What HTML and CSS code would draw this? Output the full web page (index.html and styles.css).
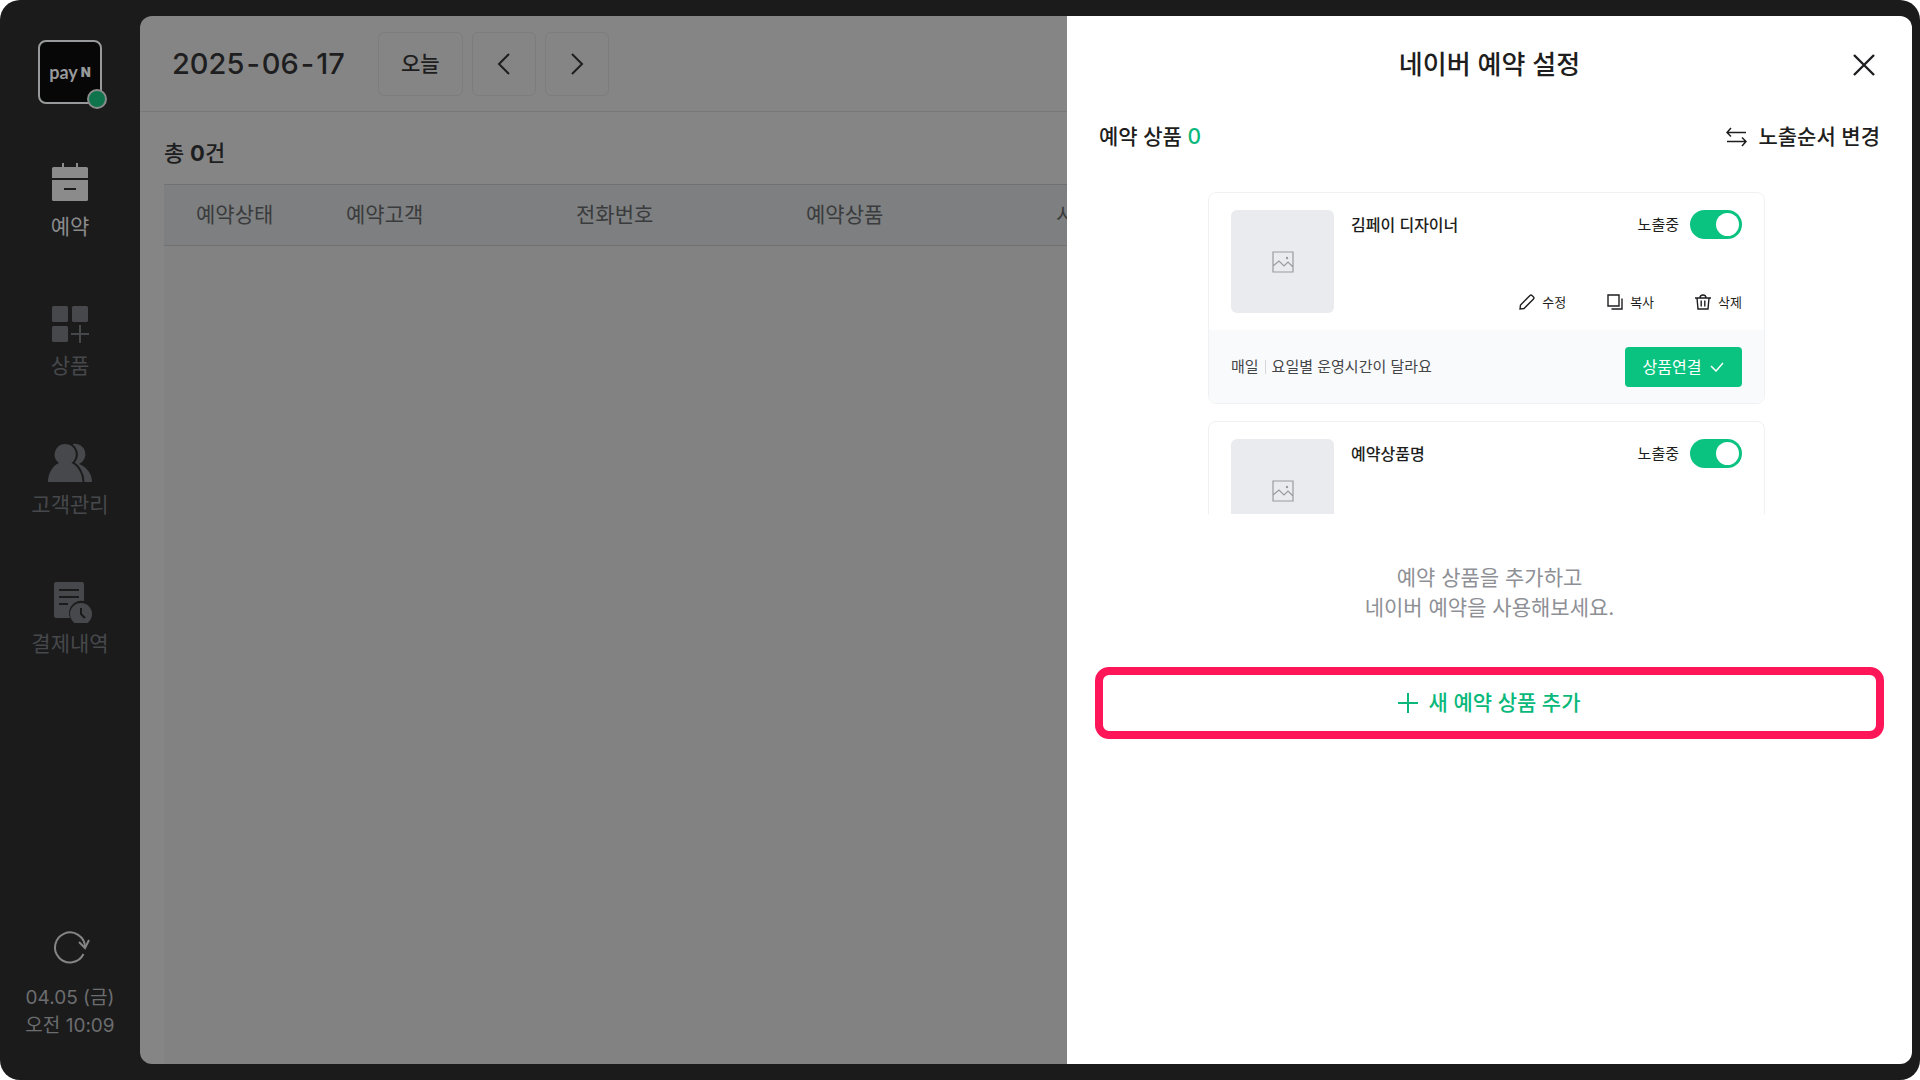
FILE: index.html
```html
<!DOCTYPE html>
<html lang="ko">
<head>
  <meta charset="UTF-8" />
  <meta name="viewport" content="width=device-width, initial-scale=1.0"/>
  <title>네이버 예약 설정</title>
  <link rel="stylesheet" href="styles.css">
</head>
<body>

  <div class="device">
    <aside class="sidebar">
      <div class="logo">
        <span class="logo-pay">pay</span><span class="logo-n">N</span>
        <span class="status-dot"></span>
      </div>

      <nav class="menu">
        <a href="#" class="active">
          <svg width="44" height="44" viewBox="0 0 44 44" fill="currentColor">
            <path d="M14 1h2v4h12V1h2v4h8.500a1.500 1.500 0 0 1 1.500 1.500V16H4V6.500A1.500 1.500 0 0 1 5.500 5H14z"/>
            <path fill-rule="evenodd" d="M4 18h36v19.500a1.500 1.500 0 0 1-1.500 1.500h-33A1.500 1.500 0 0 1 4 37.500zM16 26v2h12v-2z"/>
          </svg>
          <span>예약</span>
        </a>
        <a href="#">
          <svg width="44" height="44" viewBox="0 0 44 44" fill="currentColor">
            <rect x="4" y="5" width="16" height="16" rx="1.500"/>
            <rect x="24" y="5" width="16" height="16" rx="1.500"/>
            <rect x="4" y="25" width="16" height="16" rx="1.500"/>
            <path d="M31 24h2v8h8v2h-8v8h-2v-8h-8v-2h8z"/>
          </svg>
          <span>상품</span>
        </a>
        <a href="#">
          <svg width="46" height="44" viewBox="0 0 46 44" fill="currentColor">
            <path d="M26 4a10.500 10.500 0 0 1 6 20c8 3 13 10 13 18H25z"/>
            <path class="outline" d="M18 4a10.500 10.500 0 0 1 6.500 19C31 26 35.500 34 35.500 42H1C1 34 5 26 12 23A10.500 10.500 0 0 1 18 4z"/>
            <path d="M18 4a10.500 10.500 0 0 1 6.500 19C31 26 35.500 34 35.500 42H1C1 34 5 26 12 23A10.500 10.500 0 0 1 18 4z"/>
          </svg>
          <span>고객관리</span>
        </a>
        <a href="#">
          <svg width="44" height="44" viewBox="0 0 44 44" fill="currentColor">
            <path d="M8 3h26a2 2 0 0 1 2 2v17a12.500 12.500 0 0 0-14 17H8a2 2 0 0 1-2-2V5a2 2 0 0 1 2-2z"/>
            <path class="cut" d="M11 11h20M11 18h20M11 25h9"/>
            <circle cx="33" cy="35" r="11"/>
            <path class="cut" d="M33 29v6l4 4"/>
          </svg>
          <span>결제내역</span>
        </a>
      </nav>

      <div class="sync">
        <button type="button" class="refresh" aria-label="새로고침">
          <svg width="44" height="40" viewBox="0 0 44 40" fill="none" stroke="currentColor" stroke-width="2">
            <path d="M35.500 26A15 15 0 1 1 37 19"/>
            <path d="M31 14l6 6 4-8"/>
          </svg>
        </button>
        <p>04.05 (금)</p>
        <p>오전 10:09</p>
      </div>
    </aside>

    <div class="screen">
      <main class="reservations">
        <div class="toolbar">
          <h1 class="date"><span>2025</span><span>-</span><span>06</span><span>-</span><span>17</span></h1>
          <button type="button" class="today">오늘</button>
          <button type="button" class="arrow" aria-label="이전">
            <svg width="24" height="24" viewBox="0 0 24 24" fill="none" stroke="currentColor" stroke-width="2"><path d="M17 2L7 12l10 10"/></svg>
          </button>
          <button type="button" class="arrow" aria-label="다음">
            <svg width="24" height="24" viewBox="0 0 24 24" fill="none" stroke="currentColor" stroke-width="2"><path d="M7 2l10 10L7 22"/></svg>
          </button>
        </div>

        <p class="total">총 <b>0</b>건</p>

        <div class="table-area">
          <table>
            <thead>
              <tr>
                <th class="col-state">예약상태</th>
                <th class="col-info">예약고객</th>
                <th class="col-info">전화번호</th>
                <th class="col-product">예약상품</th>
                <th>시간</th>
              </tr>
            </thead>
          </table>
        </div>
      </main>

      <section class="panel">
        <header class="panel-header">
          <h2>네이버 예약 설정</h2>
          <button type="button" class="close" aria-label="닫기">
            <svg width="24" height="24" viewBox="0 0 24 24" fill="none" stroke="currentColor" stroke-width="2.400"><path d="M2 2l20 20M22 2L2 22"/></svg>
          </button>
        </header>

        <div class="panel-sub">
          <p>예약 상품 <em>0</em></p>
          <button type="button" class="order">
            <svg width="21" height="20" viewBox="0 0 21 20" fill="none" stroke="currentColor" stroke-width="1.500"><path d="M5 1L1 5.500l4 4M1 5.500h19M16 10.500l4 4-4 4.500M20 14.500H1"/></svg>
            노출순서 변경
          </button>
        </div>

        <div class="preview">
          <article class="card">
            <div class="card-top">
              <div class="thumb">
                <svg width="22" height="22" viewBox="0 0 22 22" fill="none" stroke="currentColor" stroke-width="1.200"><path d="M1 1h20v20H1zM1 15l6-5 5 5 4-4 5 5"/><circle cx="15" cy="7" r=".6"/></svg>
              </div>
              <div class="card-body">
                <div class="card-row">
                  <h3>김페이 디자이너</h3>
                  <label class="switch">노출중 <input type="checkbox" checked></label>
                </div>
                <div class="card-actions">
                  <button type="button">
                    <svg width="16" height="16" viewBox="0 0 16 16" fill="none" stroke="currentColor" stroke-width="1.400"><path d="M1 15l.5-4L11 1.500q1-1 2 0l1.500 1.500q1 1 0 2L5 14.500z"/></svg>
                    수정
                  </button>
                  <button type="button">
                    <svg width="16" height="16" viewBox="0 0 16 16" fill="none" stroke="currentColor" stroke-width="1.400"><path d="M1 1h11v11H1zM15 4.500V15H4.500"/></svg>
                    복사
                  </button>
                  <button type="button">
                    <svg width="16" height="16" viewBox="0 0 16 16" fill="none" stroke="currentColor" stroke-width="1.400"><path d="M0 4h16M5 4q0-3 3-3t3 3M2 4l1 11h10l1-11M6.200 6.500v6M9.800 6.500v6"/></svg>
                    삭제
                  </button>
                </div>
              </div>
            </div>
            <div class="card-bottom">
              <p class="hours"><span>매일</span><span>요일별 운영시간이 달라요</span></p>
              <button type="button" class="connect">
                상품연결
                <svg width="14" height="10" viewBox="0 0 14 10" fill="none" stroke="currentColor" stroke-width="1.500"><path d="M1 4l5 5 7-8"/></svg>
              </button>
            </div>
          </article>

          <article class="card">
            <div class="card-top">
              <div class="thumb">
                <svg width="22" height="22" viewBox="0 0 22 22" fill="none" stroke="currentColor" stroke-width="1.200"><path d="M1 1h20v20H1zM1 15l6-5 5 5 4-4 5 5"/><circle cx="15" cy="7" r=".6"/></svg>
              </div>
              <div class="card-body">
                <div class="card-row">
                  <h3>예약상품명</h3>
                  <label class="switch">노출중 <input type="checkbox" checked></label>
                </div>
              </div>
            </div>
          </article>
        </div>

        <p class="guide">예약 상품을 추가하고<br>네이버 예약을 사용해보세요.</p>

        <button type="button" class="add">
          <svg width="20" height="20" viewBox="0 0 20 20" fill="none" stroke="currentColor" stroke-width="2"><path d="M10 0v20M0 10h20"/></svg>
          새 예약 상품 추가
        </button>
      </section>
    </div>
  </div>

</body>
</html>
```
FILE: styles.css
```css
* {
  margin: 0;
  padding: 0;
  box-sizing: border-box;
}

body {
  font-family: Inter, "Noto Sans CJK KR", sans-serif;
  font-size: 21px;
  line-height: 30px;
  color: #1e1e20;
  background-color: #fff;
}

button {
  display: flex;
  align-items: center;
  justify-content: center;
  font: inherit;
  color: inherit;
  white-space: nowrap;
  background: none;
  border: none;
  cursor: pointer;
}

svg {
  flex: none;
}

.device {
  display: flex;
  height: 100vh;
  min-height: 800px;
  background-color: #1b1b1c;
  border-radius: 20px;
  overflow: hidden;
}

/* ---------- sidebar ---------- */

.sidebar {
  flex: none;
  width: 140px;
  padding: 40px 0;
  display: flex;
  flex-direction: column;
  align-items: center;
}

.logo {
  position: relative;
  width: 64px;
  height: 64px;
  display: flex;
  align-items: center;
  justify-content: center;
  gap: 3px;
  color: #98999a;
  background-color: #070707;
  border: 2px solid #98999a;
  border-radius: 8px;
}

.logo-pay {
  font-family: Lato, sans-serif;
  font-size: 18px;
  font-weight: 700;
}

.logo-n {
  font-size: 13px;
  font-weight: 900;
}

.status-dot {
  position: absolute;
  right: -7px;
  bottom: -7px;
  width: 20px;
  height: 20px;
  background-color: #0f734b;
  border: 2px solid #8a8c8c;
  border-radius: 50%;
}

.menu {
  margin-top: 58px;
  display: flex;
  flex-direction: column;
  gap: 58px;
}

.menu a {
  display: flex;
  flex-direction: column;
  align-items: center;
  gap: 5px;
  line-height: 32px;
  color: #46484b;
  text-decoration: none;
}

.menu a.active {
  color: #8b8b8c;
}

.cut {
  fill: none;
  stroke: #1b1b1c;
  stroke-width: 2;
}

.outline {
  stroke: #1b1b1c;
  stroke-width: 4;
}

.sync {
  margin-top: auto;
  font-size: 19px;
  line-height: 28px;
  text-align: center;
  color: #6c6d6f;
}

.refresh {
  margin: 0 auto 16px;
  color: #858586;
}

/* ---------- reservation list (dimmed) ---------- */

.screen {
  flex: 1;
  min-width: 0;
  margin: 16px 8px 16px 0;
  display: flex;
  border-radius: 12px;
  overflow: hidden;
}

.reservations {
  flex: 1;
  min-width: 0;
  display: flex;
  flex-direction: column;
  background-color: #858585;
  overflow: hidden;
}

.toolbar {
  flex: none;
  height: 96px;
  padding: 0 32px;
  display: flex;
  align-items: center;
  gap: 9px;
  border-bottom: 1px solid #777879;
}

.date {
  margin-right: 24px;
  display: flex;
  gap: 2px;
  font-size: 29px;
  font-weight: 500;
}

.toolbar button {
  height: 64px;
  border: 1px solid #7c7d7e;
  border-radius: 6px;
}

.today {
  width: 85px;
  font-weight: 500;
}

.arrow {
  width: 64px;
}

.total {
  padding: 26px 24px 16px;
  font-size: 22px;
  font-weight: 500;
}

.table-area {
  flex: 1;
  margin-left: 24px;
  background-color: #828283;
  overflow: hidden;
}

table {
  width: 1724px;
  table-layout: fixed;
  border-collapse: collapse;
}

th {
  height: 61px;
  padding-left: 32px;
  text-align: left;
  font-weight: 400;
  color: #3a3b3d;
  background-color: #7d7f80;
  border-top: 1px solid #6f7172;
  border-bottom: 1px solid #6f7172;
}

.col-state {
  width: 150px;
}

.col-info {
  width: 230px;
}

.col-product {
  width: 250px;
}

/* ---------- settings panel ---------- */

.panel {
  flex: none;
  width: 845px;
  padding: 1px 28px 0;
  background-color: #fff;
}

.panel-header {
  height: 96px;
  display: grid;
  grid-template-columns: 1fr auto 1fr;
  align-items: center;
}

.panel-header h2 {
  grid-column: 2;
  font-size: 26px;
  font-weight: 500;
}

.close {
  justify-self: end;
  width: 40px;
  height: 48px;
}

.panel-sub {
  height: 48px;
  padding: 0 4px;
  display: flex;
  align-items: center;
  justify-content: space-between;
  font-weight: 500;
}

.panel-sub em {
  font-style: normal;
  color: #09b87a;
}

.order {
  gap: 11px;
}

.preview {
  width: 563px;
  max-width: 100%;
  max-height: 322px;
  margin: 31px auto 0;
  padding-right: 6px;
  display: flex;
  flex-direction: column;
  gap: 17px;
  overflow: hidden;
}

.card {
  flex: none;
  border: 1px solid #f0f1f3;
  border-radius: 8px;
  overflow: hidden;
}

.card-top {
  padding: 17px 22px;
  display: flex;
  gap: 17px;
}

.thumb {
  width: 103px;
  height: 103px;
  display: flex;
  align-items: center;
  justify-content: center;
  color: #9a9b9e;
  background-color: #e9ebee;
  border-radius: 6px;
}

.card-body {
  flex: 1;
  display: flex;
  flex-direction: column;
  justify-content: space-between;
}

.card-row {
  display: flex;
  align-items: center;
  justify-content: space-between;
  line-height: 28px;
}

.card-row h3 {
  font-size: 16px;
  font-weight: 500;
}

.switch {
  display: flex;
  align-items: center;
  gap: 11px;
  font-size: 15px;
}

.switch input {
  appearance: none;
  width: 52px;
  height: 29px;
  padding: 3px;
  display: flex;
  background-color: #0ac380;
  border-radius: 15px;
}

.switch input::before {
  content: '';
  width: 23px;
  height: 23px;
  background-color: #fff;
  border-radius: 50%;
}

.switch input:checked {
  justify-content: flex-end;
}

.card-actions {
  display: flex;
  justify-content: flex-end;
  gap: 41px;
  font-size: 13px;
  line-height: 22px;
}

.card-actions button {
  gap: 7px;
}

.card-bottom {
  height: 73px;
  padding: 0 22px;
  display: flex;
  align-items: center;
  justify-content: space-between;
  background-color: #f9fafc;
}

.hours {
  display: flex;
  align-items: center;
  font-size: 15px;
  line-height: 14px;
  color: #444547;
}

.hours span + span {
  margin-left: 6px;
  padding-left: 6px;
  border-left: 1px solid #d5d7da;
}

.connect {
  width: 117px;
  height: 40px;
  gap: 9px;
  font-size: 16px;
  color: #fff;
  background-color: #0ac380;
  border-radius: 4px;
}

.guide {
  margin-top: 49px;
  text-align: center;
  color: #8e9096;
}

.add {
  width: 100%;
  height: 72px;
  margin-top: 44px;
  gap: 10px;
  font-weight: 500;
  color: #09b87a;
  border: 8px solid #ff1659;
  border-radius: 14px;
}
```
